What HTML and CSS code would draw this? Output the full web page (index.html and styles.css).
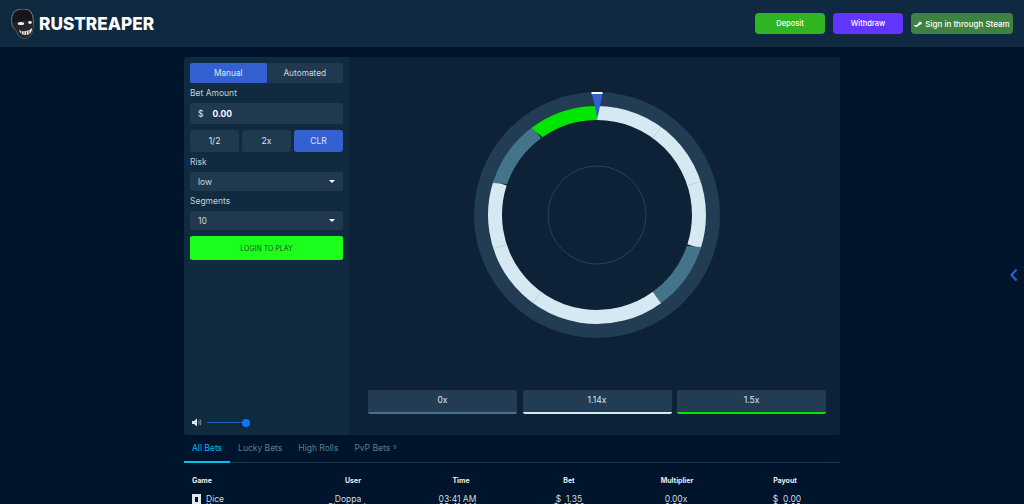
FILE: index.html
```html
<!DOCTYPE html>
<html lang="en">
<head>
  <meta charset="UTF-8">
  <meta name="viewport" content="width=device-width, initial-scale=1.0">
  <title>Rustreaper - Wheel</title>
  <link rel="stylesheet" href="styles.css">
</head>
<body>
  <header class="topbar">
    <a class="logo" href="#">
      <svg class="logo-skull" width="24" height="30" viewBox="0 0 24 30">
        <path d="M3 3 C7 -1 17 -1 20 3 C22.5 7 22.5 12 22 17 C22 23 20 28 15 29 C11 30 8 28 6.500 24 C5.500 21 3 20 1.500 17 C0 12 0.500 6 3 3Z" fill="#16161a" stroke="#8d9296" stroke-width="0.800"/>
        <path d="M2 14 C7 12 17 11 22 12 L22 17 C22 23 20 28 15 29 C11 30 8 28 6.500 24 C5.500 21 3 20 2 14Z" fill="#26262a"/>
        <ellipse cx="10" cy="14.500" rx="3.200" ry="1.500" fill="#f1f1f1"/>
        <ellipse cx="19" cy="13.500" rx="1.800" ry="1.400" fill="#f1f1f1"/>
        <path d="M8 21 C11 23 17 23 21 19 C21 23 19 26 15 26 C11 26 9 24 8 21Z" fill="#e8e8e8"/>
        <path d="M10.500 22 V25 M13 22.500 V26 M15.500 22.500 V26 M18 21.500 V25" stroke="#222" stroke-width="0.700"/>
      </svg>
      <span class="logo-text">RUSTREAPER</span>
    </a>
    <div class="topbar-actions">
      <button class="top-btn deposit">Deposit</button>
      <button class="top-btn withdraw">Withdraw</button>
      <button class="top-btn steam">
        <svg width="8" height="6" viewBox="0 0 8 6"><path d="M0 4.200 L3 4 L5 1.500 A1.500 1.500 0 1 1 6.300 3.600 L3.600 5.300 A1.200 1.200 0 0 1 1.500 5.600 L0 5Z" fill="#fff"/></svg>
        Sign in through Steam
      </button>
    </div>
  </header>

  <main class="page">
    <section class="game">
      <aside class="side">
        <div class="tabs">
          <div class="tab active">Manual</div>
          <div class="tab">Automated</div>
        </div>
        <label class="field-label">Bet Amount</label>
        <div class="amount"><span class="dollar">$</span><span class="amount-value">0.00</span></div>
        <div class="quick">
          <button class="quick-btn">1/2</button>
          <button class="quick-btn">2x</button>
          <button class="quick-btn clr">CLR</button>
        </div>
        <label class="field-label">Risk</label>
        <div class="select">low<span class="caret"></span></div>
        <label class="field-label">Segments</label>
        <div class="select">10<span class="caret"></span></div>
        <button class="play">LOGIN TO PLAY</button>
        <div class="volume">
          <svg width="10" height="9" viewBox="0 0 10 9"><path d="M0 3 H2 L5 0.500 V8.500 L2 6 H0Z" fill="#dfe7ec"/><path d="M6.500 2.500 Q7.800 4.500 6.500 6.500 M8 1.500 Q10 4.500 8 7.500" stroke="#9fb0bc" stroke-width="0.800" fill="none"/></svg>
          <div class="vol-track"><span class="vol-thumb"></span></div>
        </div>
      </aside>

      <div class="board">
        <svg class="wheel" width="246" height="246" viewBox="-123 -123 246 246">
          <circle r="116" fill="none" stroke="#223c54" stroke-width="14"/>
          <g fill="none" stroke-width="14" transform="rotate(-90)">
            <circle r="102" stroke="#d6e8f2" pathLength="360" stroke-dasharray="108 252"/>
            <circle r="102" stroke="#44748a" pathLength="360" stroke-dasharray="36 324" transform="rotate(108)"/>
            <circle r="102" stroke="#d6e8f2" pathLength="360" stroke-dasharray="144 216" transform="rotate(144)"/>
            <circle r="102" stroke="#44748a" pathLength="360" stroke-dasharray="36 324" transform="rotate(288)"/>
            <circle r="102" stroke="#00e600" pathLength="360" stroke-dasharray="36 324" transform="rotate(324)"/>
          </g>
          <g stroke="#b4c6d0" stroke-width="0.600">
            <line y1="-95" y2="-109" transform="rotate(36)"/>
            <line y1="-95" y2="-109" transform="rotate(72)"/>
            <line y1="-95" y2="-109" transform="rotate(216)"/>
            <line y1="-95" y2="-109" transform="rotate(252)"/>
          </g>
          <circle r="49" fill="none" stroke="#2a4155" stroke-width="1"/>
          <rect x="-5.500" y="-123" width="11" height="2" fill="#fff"/>
          <path d="M-5 -121 H5.500 L0.500 -97Z" fill="#3460d0"/>
        </svg>
        <div class="payouts">
          <div class="payout gray">0x</div>
          <div class="payout white">1.14x</div>
          <div class="payout green">1.5x</div>
        </div>
      </div>
    </section>

    <nav class="bet-tabs">
      <a class="bet-tab active" href="#">All Bets</a>
      <a class="bet-tab" href="#">Lucky Bets</a>
      <a class="bet-tab" href="#">High Rolls</a>
      <a class="bet-tab" href="#">PvP Bets <sup>9</sup></a>
    </nav>

    <div class="bets">
      <div class="bets-head">
        <div class="game-col">Game</div><div>User</div><div>Time</div><div>Bet</div><div>Multiplier</div><div>Payout</div>
      </div>
      <div class="bets-row">
        <div class="game-col"><svg width="9" height="10" viewBox="0 0 9 10"><path d="M0 0 H9 V10 H6 V3 H3 V10 H0Z" fill="#dfe7ec"/></svg>Dice</div><div>Doppa</div><div>03:41 AM</div><div>$&nbsp; 1.35</div><div>0.00x</div><div>$&nbsp; 0.00</div>
      </div>
      <div class="bets-row">
        <div class="game-col"><svg width="9" height="10" viewBox="0 0 9 10"><path d="M0 0 H9 V10 H0Z" fill="#dfe7ec"/></svg>Keno</div><div>Shamrock</div><div>03:41 AM</div><div>$&nbsp; 18.00</div><div>0.00x</div><div>$&nbsp; 0.00</div>
      </div>
    </div>
  </main>

  <svg class="side-toggle" width="8" height="14" viewBox="0 0 8 14"><path d="M6.500 1.500 L1.500 7 L6.500 12.500" fill="none" stroke="#2a5fd0" stroke-width="2.200"/></svg>
</body>
</html>
```

FILE: styles.css
```css
html, body {
  height: 100%;
  overflow: hidden;
}

body {
  margin: 0;
  background-color: #00152b;
  color: #dfe7ec;
  font-family: Inter, "Open Sans", sans-serif;
  font-size: 8px;
}

button {
  border: none;
  font-family: inherit;
  cursor: pointer;
}

a {
  text-decoration: none;
  color: inherit;
}

.topbar {
  display: flex;
  justify-content: space-between;
  align-items: center;
  height: 47px;
  padding: 0 11px;
  box-sizing: border-box;
  background-color: #0f2940;
}

.logo {
  display: flex;
  align-items: center;
  gap: 4px;
}

.logo-text {
  color: #fff;
  font-size: 17.200px;
  font-weight: 800;
}

.topbar-actions {
  display: flex;
  gap: 8px;
}

.top-btn {
  display: flex;
  justify-content: center;
  align-items: center;
  gap: 3px;
  width: 70px;
  height: 21px;
  padding: 0;
  border-radius: 4px;
  color: #fff;
  font-size: 7.500px;
  font-weight: 500;
  white-space: nowrap;
}

.deposit {
  background-color: #2eb520;
}

.withdraw {
  background-color: #6236ff;
}

.steam {
  width: 102px;
  background-color: #3d8241;
  font-size: 8px;
}

.page {
  width: 656px;
  margin: 10px auto 0;
}

.game {
  display: flex;
  height: 378px;
  background-color: #0d2236;
  border-radius: 3px;
}

.side {
  display: flex;
  flex-direction: column;
  width: 165px;
  padding: 6px;
  box-sizing: border-box;
  background-color: #102a40;
  border-radius: 3px 0 0 3px;
}

.tabs {
  display: flex;
  height: 20px;
  background-color: #21394f;
  border-radius: 2px;
}

.tab {
  flex: 1;
  display: flex;
  justify-content: center;
  align-items: center;
  color: #c9d5dd;
  font-size: 8.300px;
}

.tab.active {
  background-color: #3460d0;
  color: #dfe7f5;
  border-radius: 2px;
}

.field-label {
  height: 20px;
  line-height: 20px;
  color: #c3cfd7;
  font-size: 8.500px;
}

.amount {
  display: flex;
  align-items: center;
  gap: 9px;
  height: 21px;
  padding-left: 8px;
  background-color: #21394f;
  border-radius: 2px;
  font-size: 8.500px;
}

.amount-value {
  color: #fff;
  font-weight: 700;
}

.quick {
  display: flex;
  gap: 3px;
  margin-top: 6px;
}

.quick-btn {
  flex: 1;
  height: 22px;
  background-color: #21394f;
  color: #dfe7ec;
  border-radius: 3px;
  font-size: 8.500px;
}

.quick-btn.clr {
  background-color: #3460d0;
}

.select {
  display: flex;
  justify-content: space-between;
  align-items: center;
  height: 19px;
  padding: 0 8px;
  background-color: #21394f;
  border-radius: 2px;
  color: #c9d5dd;
  font-size: 8.500px;
}

.caret {
  width: 0;
  height: 0;
  border-left: 3px solid transparent;
  border-right: 3px solid transparent;
  border-top: 3px solid #fff;
}

.play {
  height: 24px;
  margin-top: 6px;
  background-color: #1cff1c;
  color: #14551f;
  border-radius: 2px;
  font-size: 7px;
}

.volume {
  display: flex;
  align-items: center;
  gap: 5px;
  margin-top: auto;
  padding: 0 0 2px 2px;
}

.vol-track {
  display: flex;
  align-items: center;
  justify-content: flex-end;
  width: 39px;
  height: 1.500px;
  background-color: #1c62b8;
}

.vol-thumb {
  width: 8px;
  height: 8px;
  margin-right: -4px;
  border-radius: 50%;
  background-color: #0a78f5;
}

.board {
  flex: 1;
  display: flex;
  flex-direction: column;
  align-items: center;
  padding: 35px 14px 0 19px;
}

.wheel {
  display: block;
  margin-bottom: 52px;
}

.payouts {
  display: flex;
  justify-content: space-between;
  width: 100%;
}

.payout {
  width: 149px;
  height: 24px;
  padding-bottom: 2px;
  box-sizing: border-box;
  display: flex;
  justify-content: center;
  align-items: center;
  background-color: #223c54;
  border-radius: 2px;
  border-bottom: 2px solid;
  font-size: 8.500px;
}

.payout.gray {
  border-color: #44748a;
}

.payout.white {
  border-color: #d6e8f2;
}

.payout.green {
  border-color: #00e600;
}

.bet-tabs {
  display: flex;
  height: 27px;
  border-bottom: 1px solid #17384f;
}

.bet-tab {
  display: flex;
  align-items: center;
  height: 26px;
  padding: 0 8px;
  color: #5b7c92;
  font-size: 8.500px;
}

.bet-tab.active {
  color: #00b7e0;
  border-bottom: 2px solid #00c4e8;
}

.bet-tab sup {
  font-size: 5px;
  margin-left: 3px;
  margin-top: -3px;
  vertical-align: top;
}

.bets {
  padding-top: 14px;
}

.bets-head,
.bets-row {
  display: grid;
  padding-left: 8px;
  text-align: center;
}

.bets-head {
  grid-template-columns: 107px repeat(5, 108px);
  height: 16px;
  margin-bottom: 2px;
  line-height: 8px;
  color: #e8eef2;
  font-weight: 700;
  font-size: 7px;
}

.bets-row {
  grid-template-columns: 107px 98px 121px 102px 112px 110px;
  height: 8px;
  line-height: 8px;
  color: #cfd9e0;
  font-size: 8.500px;
}

.game-col {
  display: flex;
  align-items: center;
  gap: 5px;
  height: 8px;
}

.side-toggle {
  position: absolute;
  top: 268px;
  right: 6px;
}
```
